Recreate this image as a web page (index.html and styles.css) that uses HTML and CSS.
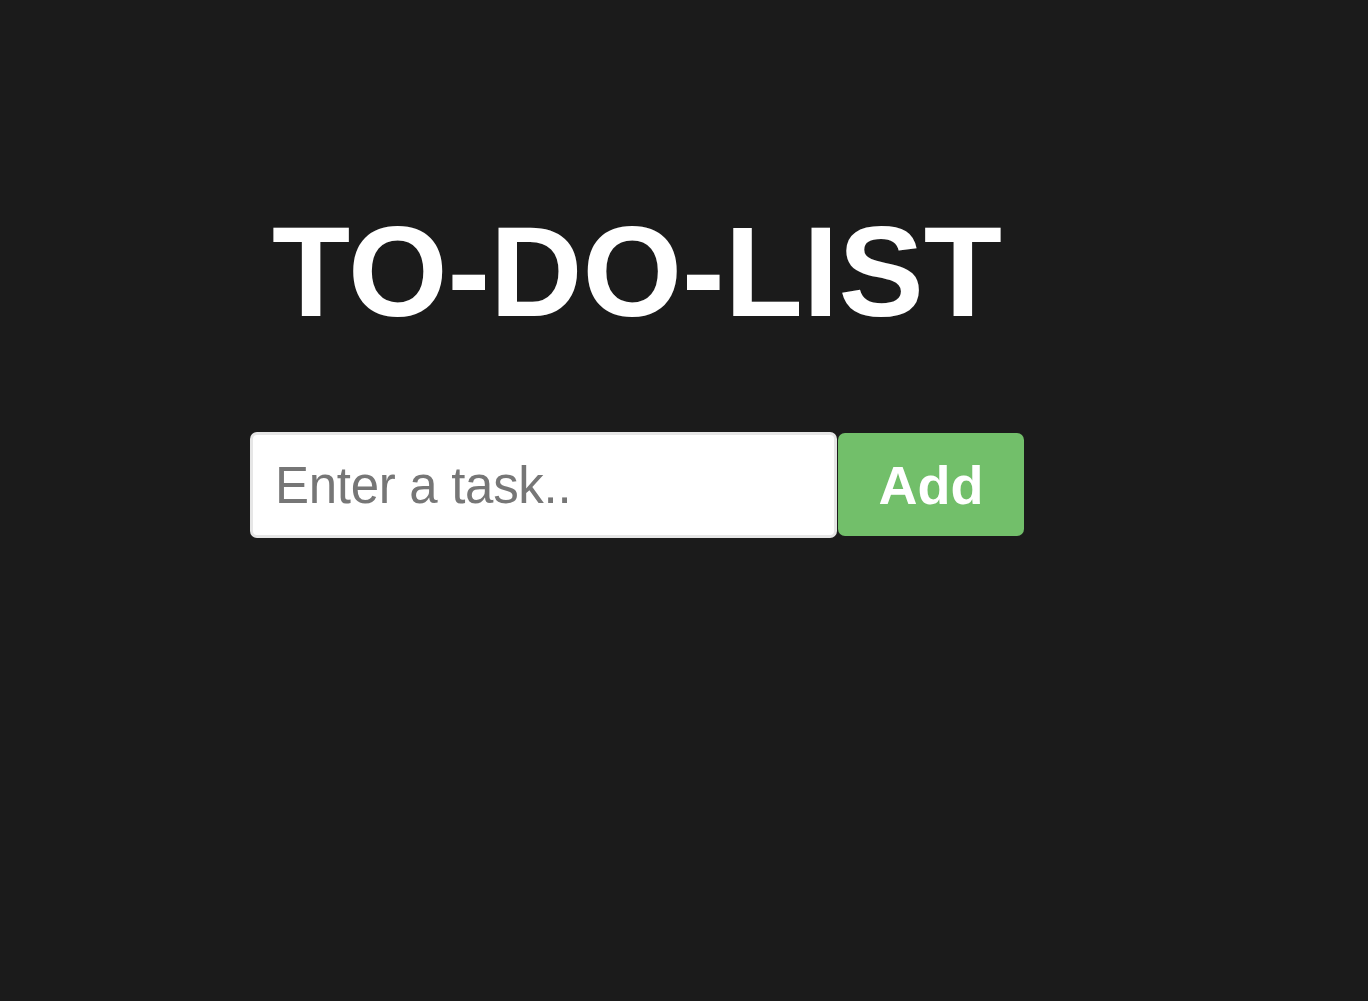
FILE: index.html
```html
<!DOCTYPE html>
<html lang="en">
<head>
<meta charset="utf-8">
<title>To-Do-List</title>
<link rel="stylesheet" href="styles.css">
</head>
<body>
<div class="app">
  <h1 class="title">TO-DO-LIST</h1>
  <div class="entry">
    <input class="task-input" type="text" placeholder="Enter a task..">
    <button class="add-btn" type="button">Add</button>
  </div>
</div>
</body>
</html>
```
FILE: styles.css
```css
html, body {
  margin: 0;
  padding: 0;
  background: #1b1b1b;
  height: 100%;
}
body {
  font-family: "Liberation Sans", Arial, sans-serif;
}
.app {
  width: 774px;
  margin-left: 250px;
  padding-top: 208px;
  display: flex;
  flex-direction: column;
}
.title {
  margin: 0;
  font-size: 128px;
  line-height: 128px;
  font-weight: bold;
  color: #ffffff;
  text-align: center;
}
.entry {
  margin-top: 96px;
  display: flex;
  align-items: flex-start;
}
.task-input {
  box-sizing: border-box;
  width: 587px;
  height: 106px;
  border: 3px solid #e6e6e6;
  border-radius: 7px;
  padding: 0 22px;
  font-family: "Liberation Sans", Arial, sans-serif;
  font-size: 51px;
  letter-spacing: -0.3px;
  color: #333;
  background: #fff;
  outline: none;
}
.task-input::placeholder {
  color: #767676;
}
.add-btn {
  box-sizing: border-box;
  width: 186px;
  height: 103px;
  margin-top: 1px;
  margin-left: 1px;
  border: none;
  border-radius: 7px;
  background: #72bf6a;
  color: #ffffff;
  font-family: "Liberation Sans", Arial, sans-serif;
  font-weight: bold;
  font-size: 54px;
  padding: 0;
  cursor: pointer;
}
```
